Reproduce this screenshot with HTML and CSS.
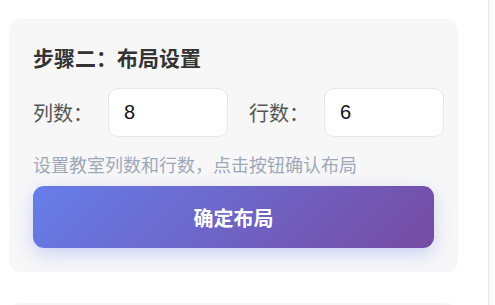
FILE: index.html
```html
<!DOCTYPE html>
<html lang="zh-CN">
<head>
<meta charset="utf-8">
<title>布局设置</title>
<link rel="stylesheet" href="styles.css">
</head>
<body>
<div class="page">
  <main class="main">
    <section class="card">
      <h2 class="card-title">步骤二：布局设置</h2>
      <div class="field-row">
        <label class="field-label">列数：</label>
        <input class="field-input" type="text" value="8">
        <label class="field-label">行数：</label>
        <input class="field-input" type="text" value="6">
      </div>
      <p class="hint">设置教室列数和行数，点击按钮确认布局</p>
      <button class="primary-btn">确定布局</button>
    </section>
    <section class="card card-next"></section>
  </main>
  <aside class="side"></aside>
</div>
</body>
</html>
```
FILE: styles.css
```css
* { box-sizing: border-box; }
html, body {
  margin: 0;
  padding: 0;
  background: #ffffff;
  font-family: "Noto Sans CJK SC", "Noto Sans", sans-serif;
  overflow: hidden;
}
.page {
  display: flex;
  height: 305px;
}
.main {
  width: 488px;
  padding: 19px 0 0 9px;
  flex: none;
}
.side {
  flex: 1;
  border-left: 1px solid #e2e8f0;
  background: #f8fafc;
}
.card {
  width: 449px;
  background: #f7f7f8;
  border-radius: 12px;
  padding: 24px 24px 24px 24px;
  margin-bottom: 31px;
}
.card-next {
  height: 120px;
}
.card-title {
  margin: 0;
  font-size: 21px;
  line-height: 28px;
  font-weight: 700;
  color: #333333;
}
.field-row {
  display: flex;
  align-items: center;
  margin-top: 17px;
  white-space: nowrap;
}
.field-label {
  font-size: 20px;
  color: #555555;
  width: 60px;
  margin-right: 15px;
  flex: none;
}
.field-input {
  width: 120px;
  height: 49px;
  flex: none;
  margin-right: 21px;
  border: 1px solid #e2e8f0;
  border-radius: 10px;
  background: #ffffff;
  padding: 0 0 0 15px;
  font-family: "Liberation Sans", Arial, sans-serif;
  font-size: 20px;
  color: #111111;
  outline: none;
}
.hint {
  margin: 15px 0 0 0;
  font-size: 18px;
  line-height: 24px;
  color: #a0a8b8;
}
.primary-btn {
  display: block;
  width: 100%;
  height: 62px;
  margin-top: 10px;
  border: none;
  border-radius: 11px;
  background: linear-gradient(135deg, #667eea 0%, #764ba2 100%);
  color: #ffffff;
  font-family: "Noto Sans CJK SC", "Noto Sans", sans-serif;
  font-size: 20px;
  font-weight: 700;
  box-shadow: 0 6px 18px rgba(102, 126, 234, 0.3);
  cursor: pointer;
}
```
